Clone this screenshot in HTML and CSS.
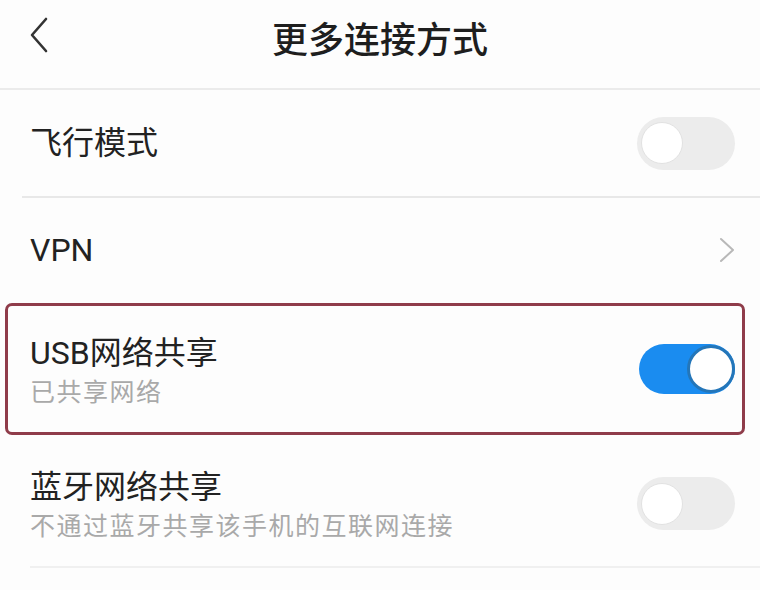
FILE: index.html
```html
<!DOCTYPE html>
<html lang="zh-CN">
<head>
<meta charset="utf-8">
<link rel="stylesheet" href="styles.css">
</head>
<body>
<div class="page">
  <header class="header">
    <svg class="back" width="20" height="36" viewBox="0 0 20 36"><path d="M17 2 L3 18 L17 34" fill="none" stroke="#333" stroke-width="2.6" stroke-linecap="round" stroke-linejoin="round"/></svg>
    <h1 class="title">更多连接方式</h1>
  </header>

  <div class="row row-first">
    <div class="label"><div class="name">飞行模式</div></div>
    <div class="toggle"><span class="knob"></span></div>
  </div>
  <div class="divider divider-a"></div>

  <div class="row row-vpn">
    <div class="label"><div class="name">VPN</div></div>
    <svg class="chev" width="16" height="26" viewBox="0 0 16 26"><path d="M2 2 L14 13 L2 24" fill="none" stroke="#b8b8b8" stroke-width="2" stroke-linecap="round" stroke-linejoin="round"/></svg>
  </div>

  <div class="row row-usb">
    <div class="label">
      <div class="name">USB网络共享</div>
      <div class="sub">已共享网络</div>
    </div>
    <div class="toggle on"><span class="knob"></span></div>
  </div>

  <div class="row row-bt">
    <div class="label">
      <div class="name">蓝牙网络共享</div>
      <div class="sub">不通过蓝牙共享该手机的互联网连接</div>
    </div>
    <div class="toggle"><span class="knob"></span></div>
  </div>
  <div class="divider divider-b"></div>
</div>
</body>
</html>
```

FILE: styles.css
```css
html, body {
  margin: 0;
  padding: 0;
  background: #fdfdfd;
}
body {
  font-family: "Roboto", "Noto Sans CJK SC", sans-serif;
  color: #222;
}
.page {
  width: 760px;
  height: 590px;
  display: flex;
  flex-direction: column;
  overflow: hidden;
}
.header {
  height: 88px;
  border-bottom: 2px solid #ebebeb;
  display: flex;
  align-items: center;
  justify-content: center;
  position: relative;
}
.back {
  position: absolute;
  left: 29px;
  top: 17px;
}
.title {
  margin: 0;
  font-family: "Noto Sans CJK SC", sans-serif;
  font-size: 36px;
  font-weight: 500;
  color: #1e1e1e;
  margin-top: -14px;
}
.row {
  display: flex;
  align-items: center;
  justify-content: space-between;
  padding: 0 25px 0 30px;
}
.row-first { height: 106px; }
.row-vpn { height: 103px; }
.row-usb {
  height: 126px;
  margin: 2px 15px 0 5px;
  padding: 0 7px 0 22px;
  border: 3px solid #8f3c4a;
  border-radius: 7px;
}
.row-bt { height: 131px; }
.label {
  display: flex;
  flex-direction: column;
}
.name {
  font-size: 32px;
  line-height: 40px;
  color: #222;
}
.sub {
  font-family: "Noto Sans CJK SC", sans-serif;
  font-size: 25px;
  line-height: 34px;
  letter-spacing: 1.5px;
  color: #a9a9a9;
}
.row-usb .name { margin-top: 2px; }
.row-bt .name { margin-top: 6px; }
.row-bt .toggle { margin-top: 6px; }
.divider {
  height: 2px;
  background: #e8e8e8;
}
.divider-a { margin-left: 22px; }
.divider-b { margin-left: 30px; background: #f0f0f0; }
.toggle {
  width: 98px;
  height: 53px;
  border-radius: 27px;
  background: #ececec;
  display: flex;
  align-items: center;
  padding: 0 4px;
  box-sizing: border-box;
}
.knob {
  width: 42px;
  height: 42px;
  border-radius: 50%;
  background: #fff;
  border: 1px solid #e2e2e2;
  box-sizing: border-box;
}
.toggle.on {
  width: 96px;
  height: 50px;
  background: #1a8cf0;
  justify-content: flex-end;
  padding: 0;
}
.toggle.on .knob {
  width: 48px;
  height: 48px;
  border: 3px solid #2476b9;
}
```
